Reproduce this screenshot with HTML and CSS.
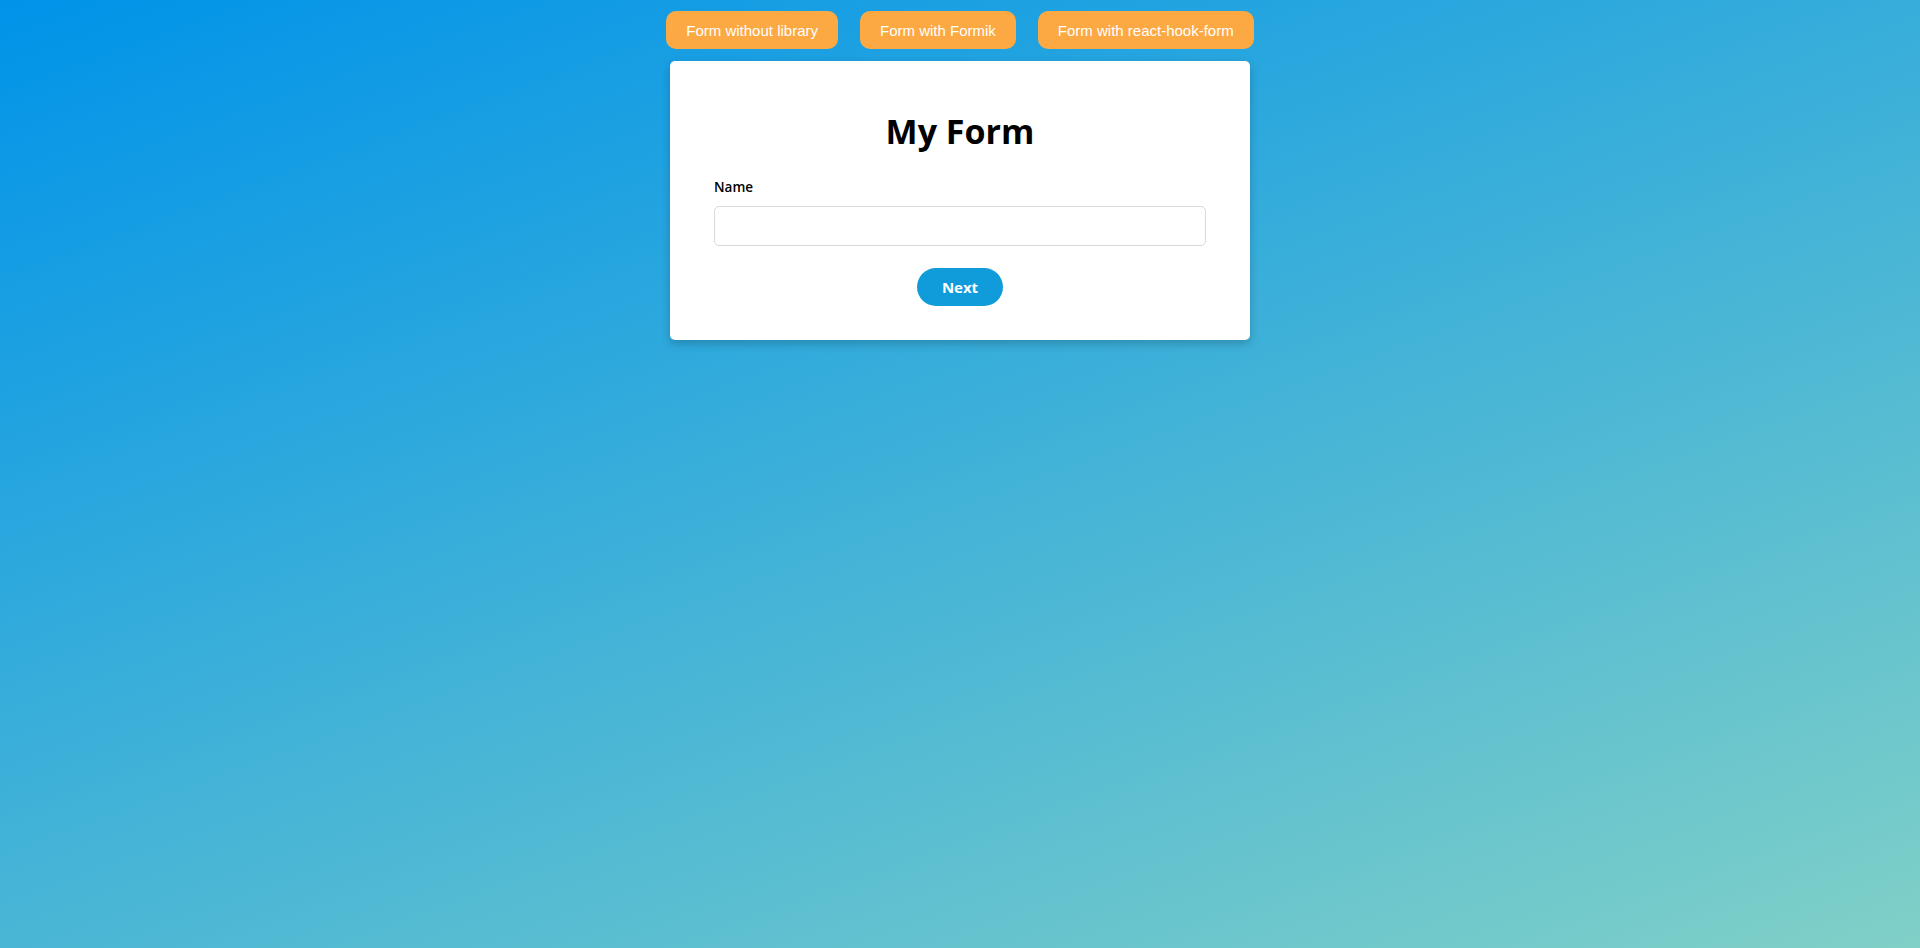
FILE: index.html
```html
<!DOCTYPE html>
<html lang="en">
<head>
<meta charset="utf-8">
<title>My Form</title>
<link rel="stylesheet" href="styles.css">
</head>
<body>
<nav class="nav">
  <button class="nav-btn" type="button">Form without library</button>
  <button class="nav-btn" type="button">Form with Formik</button>
  <button class="nav-btn" type="button">Form with react-hook-form</button>
</nav>
<main class="card">
  <h1 class="title">My Form</h1>
  <form class="form">
    <label class="label" for="name">Name</label>
    <input class="input" id="name" type="text">
    <div class="actions">
      <button class="next" type="button">Next</button>
    </div>
  </form>
</main>
</body>
</html>
```
FILE: styles.css
```css
html, body {
  margin: 0;
  padding: 0;
}
body {
  min-height: 100vh;
  background: linear-gradient(160deg, #0093e9 0%, #80d0c7 100%);
  font-family: "Open Sans", "Noto Sans", sans-serif;
}
.nav {
  display: flex;
  justify-content: center;
  gap: 22px;
  padding-top: 11px;
}
.nav-btn {
  height: 38px;
  padding: 0 20px;
  border: none;
  border-radius: 10px;
  background: #fda943;
  color: #fff;
  font-family: "Liberation Sans", Arial, sans-serif;
  font-size: 15px;
  cursor: pointer;
}
.card {
  box-sizing: border-box;
  width: 580px;
  margin: 12px auto 0;
  padding: 46px 44px 34px;
  background: #fff;
  border-radius: 5px;
  box-shadow: 0 4px 10px rgba(0, 0, 0, 0.2);
}
.title {
  margin: 0 0 22px;
  text-align: center;
  font-size: 34px;
  font-weight: 700;
  line-height: 48px;
  color: #000;
}
.form {
  display: flex;
  flex-direction: column;
}
.label {
  font-size: 13.5px;
  font-weight: 600;
  line-height: 20px;
  color: #000;
  margin-bottom: 9px;
}
.input {
  box-sizing: border-box;
  height: 40px;
  width: 100%;
  border: 1px solid #d9d9d9;
  border-radius: 5px;
  padding: 0 10px;
  font-size: 15px;
}
.actions {
  display: flex;
  justify-content: center;
  margin-top: 22px;
}
.next {
  width: 86px;
  height: 38px;
  border: none;
  border-radius: 19px;
  background: #109cdb;
  color: #fff;
  font-family: "Open Sans", sans-serif;
  font-size: 15px;
  font-weight: 700;
  cursor: pointer;
}
```
